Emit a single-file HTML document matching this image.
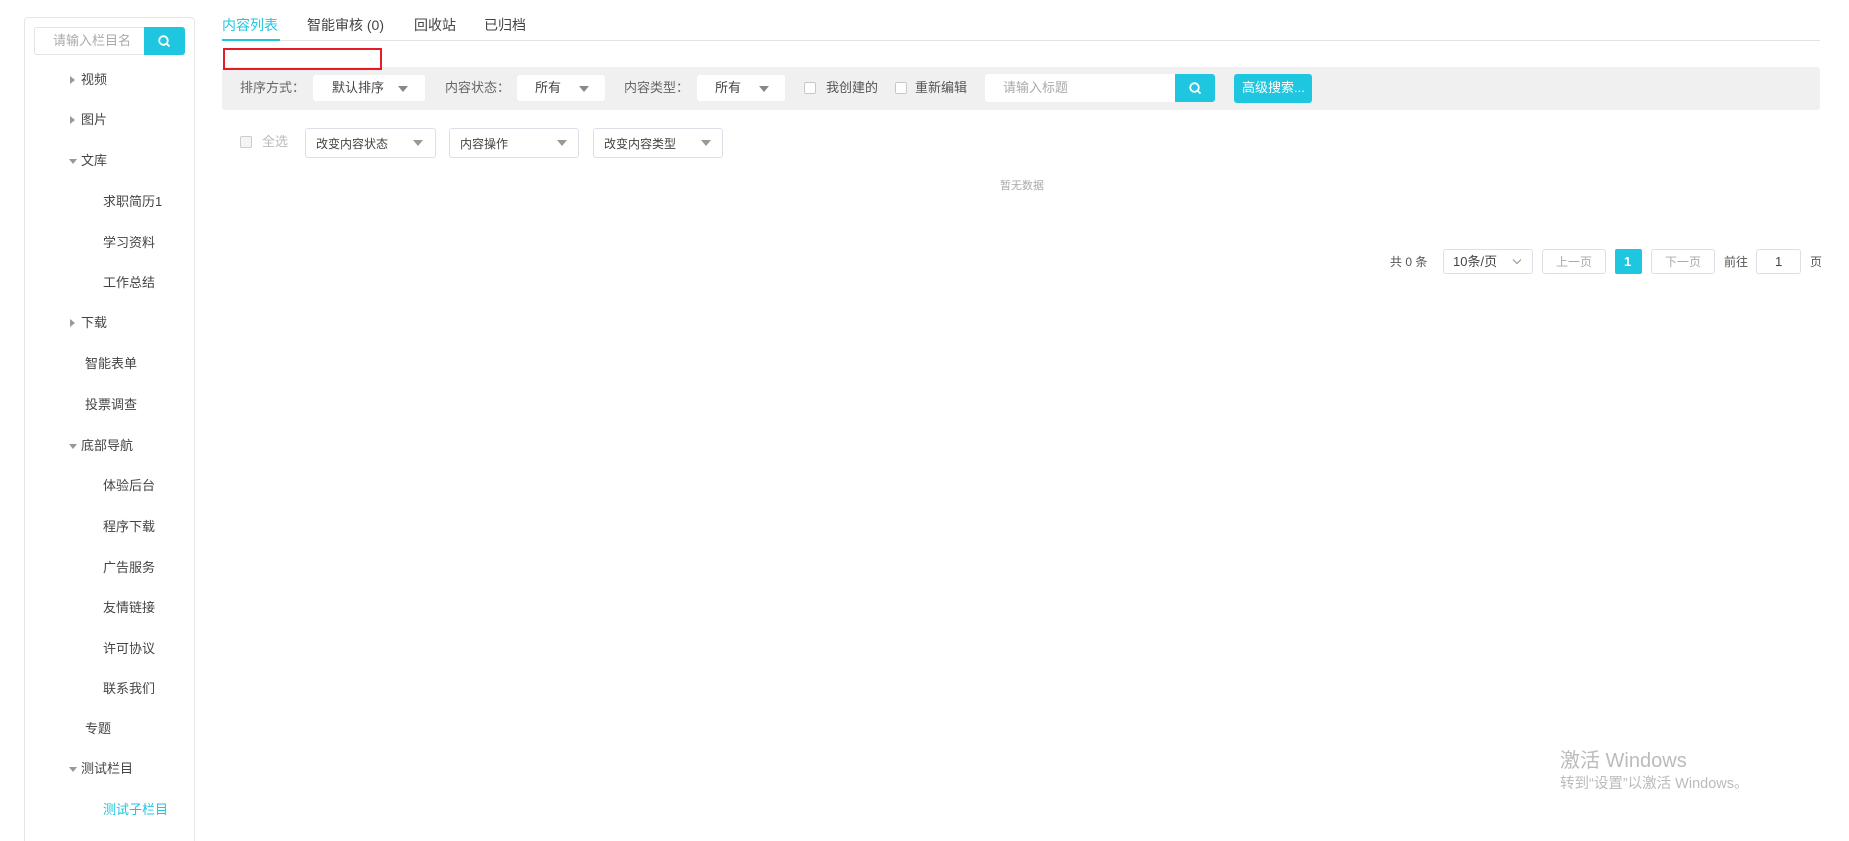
<!DOCTYPE html>
<html><head><meta charset="utf-8"><style>
*{margin:0;padding:0;box-sizing:border-box}
html{width:1849px;height:841px;overflow:hidden}
body{width:1849px;height:841px;background:#fff;position:relative;overflow:hidden;font-family:"Liberation Sans","Noto Sans CJK SC",sans-serif;color:#444}
.a{position:absolute}
.t{position:absolute;font-size:13px;line-height:16px;white-space:nowrap}
.side{left:24px;top:17px;width:171px;height:824px;border:1px solid #e6e6e6;border-bottom:none;border-radius:4px 4px 0 0}
.sel{position:absolute;background:#fff;border-radius:3px}
.tri{position:absolute;width:0;height:0;border-left:5px solid transparent;border-right:5px solid transparent;border-top:6px solid #888}
.arr{position:absolute;width:0;height:0;border-top:4px solid transparent;border-bottom:4px solid transparent;border-left:5px solid #999}
.arrd{position:absolute;width:0;height:0;border-left:4px solid transparent;border-right:4px solid transparent;border-top:5px solid #999}
.cb{position:absolute;width:12px;height:12px;border:1px solid #c8c8c8;background:#fff;border-radius:2px}
.b2{position:absolute;border:1px solid #dcdfe6;border-radius:3px;background:#fff}
</style></head><body>
<div class="a side"></div>
<div class="a" style="left:34px;top:27px;width:111px;height:28px;border:1px solid #e3e3e3;border-right:none;border-radius:3px 0 0 3px"></div>
<div class="t" style="left:53px;top:33px;color:#aaa">请输入栏目名</div>
<div class="a" style="left:144px;top:27px;width:41px;height:28px;background:#1fc6e0;border-radius:0 3px 3px 0"></div>
<svg class="a" style="left:157px;top:34px" width="15" height="15" viewBox="0 0 15 15"><circle cx="6.5" cy="6.5" r="4.3" fill="none" stroke="#fff" stroke-width="1.8"/><line x1="9.6" y1="9.6" x2="12.5" y2="12.5" stroke="#fff" stroke-width="1.8"/></svg>

<div class="arr" style="left:70px;top:76px"></div><div class="t" style="left:81px;top:72px">视频</div>
<div class="arr" style="left:70px;top:116px"></div><div class="t" style="left:81px;top:112px">图片</div>
<div class="arrd" style="left:69px;top:159px"></div><div class="t" style="left:81px;top:153px">文库</div>
<div class="t" style="left:103px;top:194px">求职简历1</div>
<div class="t" style="left:103px;top:235px">学习资料</div>
<div class="t" style="left:103px;top:275px">工作总结</div>
<div class="arr" style="left:70px;top:319px"></div><div class="t" style="left:81px;top:315px">下载</div>
<div class="t" style="left:85px;top:356px">智能表单</div>
<div class="t" style="left:85px;top:397px">投票调查</div>
<div class="arrd" style="left:69px;top:444px"></div><div class="t" style="left:81px;top:438px">底部导航</div>
<div class="t" style="left:103px;top:478px">体验后台</div>
<div class="t" style="left:103px;top:519px">程序下载</div>
<div class="t" style="left:103px;top:560px">广告服务</div>
<div class="t" style="left:103px;top:600px">友情链接</div>
<div class="t" style="left:103px;top:641px">许可协议</div>
<div class="t" style="left:103px;top:681px">联系我们</div>
<div class="t" style="left:85px;top:721px">专题</div>
<div class="arrd" style="left:69px;top:767px"></div><div class="t" style="left:81px;top:761px">测试栏目</div>
<div class="t" style="left:103px;top:802px;color:#1fc6e0">测试子栏目</div>

<div class="t" style="left:222px;top:17px;font-size:14px;color:#1fc6e0">内容列表</div>
<div class="t" style="left:307px;top:17px;font-size:14px">智能审核 (0)</div>
<div class="t" style="left:414px;top:17px;font-size:14px">回收站</div>
<div class="t" style="left:484px;top:17px;font-size:14px">已归档</div>
<div class="a" style="left:222px;top:40px;width:1598px;height:1px;background:#e4e4e4"></div>
<div class="a" style="left:222px;top:39px;width:58px;height:2px;background:#1fc6e0"></div>

<div class="a" style="left:222px;top:67px;width:1598px;height:43px;background:#f0f0f0;border-radius:3px"></div>
<div class="a" style="left:223px;top:48px;width:159px;height:22px;border:2px solid #e51c23"></div>
<div class="t" style="left:240px;top:80px;color:#666">排序方式：</div>
<div class="sel" style="left:313px;top:75px;width:112px;height:26px"></div><div class="t" style="left:332px;top:80px">默认排序</div><div class="tri" style="left:398px;top:86px"></div>
<div class="t" style="left:445px;top:80px;color:#666">内容状态：</div>
<div class="sel" style="left:517px;top:75px;width:88px;height:26px"></div><div class="t" style="left:535px;top:80px">所有</div><div class="tri" style="left:579px;top:86px"></div>
<div class="t" style="left:624px;top:80px;color:#666">内容类型：</div>
<div class="sel" style="left:697px;top:75px;width:88px;height:26px"></div><div class="t" style="left:715px;top:80px">所有</div><div class="tri" style="left:759px;top:86px"></div>
<div class="cb" style="left:804px;top:82px"></div><div class="t" style="left:826px;top:80px;color:#555">我创建的</div>
<div class="cb" style="left:895px;top:82px"></div><div class="t" style="left:915px;top:80px;color:#555">重新编辑</div>
<div class="sel" style="left:985px;top:74px;width:200px;height:28px"></div><div class="t" style="left:1003px;top:80px;color:#aaa">请输入标题</div>
<div class="a" style="left:1175px;top:74px;width:40px;height:28px;background:#1fc6e0;border-radius:0 3px 3px 0"></div>
<svg class="a" style="left:1188px;top:81px" width="15" height="15" viewBox="0 0 15 15"><circle cx="6.5" cy="6.5" r="4.3" fill="none" stroke="#fff" stroke-width="1.8"/><line x1="9.6" y1="9.6" x2="12.5" y2="12.5" stroke="#fff" stroke-width="1.8"/></svg>
<div class="a" style="left:1234px;top:74px;width:78px;height:29px;background:#1fc6e0;border-radius:3px"></div><div class="t" style="left:1242px;top:80px;color:#fff">高级搜索...</div>

<div class="cb" style="left:240px;top:136px;border-color:#ccc;background:#f5f5f5"></div><div class="t" style="left:262px;top:134px;color:#bbb">全选</div>
<div class="b2" style="left:305px;top:128px;width:131px;height:30px"></div><div class="t" style="left:316px;top:136px;font-size:12px;color:#444">改变内容状态</div><div class="tri" style="left:413px;top:140px;border-top-color:#999"></div>
<div class="b2" style="left:449px;top:128px;width:130px;height:30px"></div><div class="t" style="left:460px;top:136px;font-size:12px;color:#444">内容操作</div><div class="tri" style="left:557px;top:140px;border-top-color:#999"></div>
<div class="b2" style="left:593px;top:128px;width:130px;height:30px"></div><div class="t" style="left:604px;top:136px;font-size:12px;color:#444">改变内容类型</div><div class="tri" style="left:701px;top:140px;border-top-color:#999"></div>
<div class="t" style="left:1000px;top:178px;font-size:11px;color:#aaa">暂无数据</div>

<div class="t" style="left:1390px;top:254px;font-size:12px;color:#555">共 0 条</div>
<div class="b2" style="left:1443px;top:249px;width:90px;height:25px"></div><div class="t" style="left:1453px;top:254px;font-size:13px">10条/页</div>
<svg class="a" style="left:1512px;top:258px" width="10" height="7" viewBox="0 0 10 7"><path d="M1 1.5L5 5.5L9 1.5" fill="none" stroke="#999" stroke-width="1.2"/></svg>
<div class="b2" style="left:1542px;top:249px;width:64px;height:25px"></div><div class="t" style="left:1556px;top:254px;color:#aaa;font-size:12px">上一页</div>
<div class="a" style="left:1615px;top:249px;width:27px;height:25px;background:#1fc6e0;border-radius:2px"></div><div class="t" style="left:1624px;top:254px;color:#fff;font-weight:bold;font-size:13px">1</div>
<div class="b2" style="left:1651px;top:249px;width:64px;height:25px"></div><div class="t" style="left:1665px;top:254px;color:#aaa;font-size:12px">下一页</div>
<div class="t" style="left:1724px;top:254px;font-size:12px;color:#555">前往</div>
<div class="b2" style="left:1756px;top:249px;width:45px;height:25px"></div><div class="t" style="left:1775px;top:254px">1</div>
<div class="t" style="left:1810px;top:254px;font-size:12px;color:#555">页</div>

<div class="t" style="left:1560px;top:749px;font-size:20px;line-height:24px;color:#bbb">激活 Windows</div>
<div class="t" style="left:1560px;top:776px;font-size:14.5px;line-height:17px;color:#bbb">转到“设置”以激活 Windows。</div>
</body></html>
